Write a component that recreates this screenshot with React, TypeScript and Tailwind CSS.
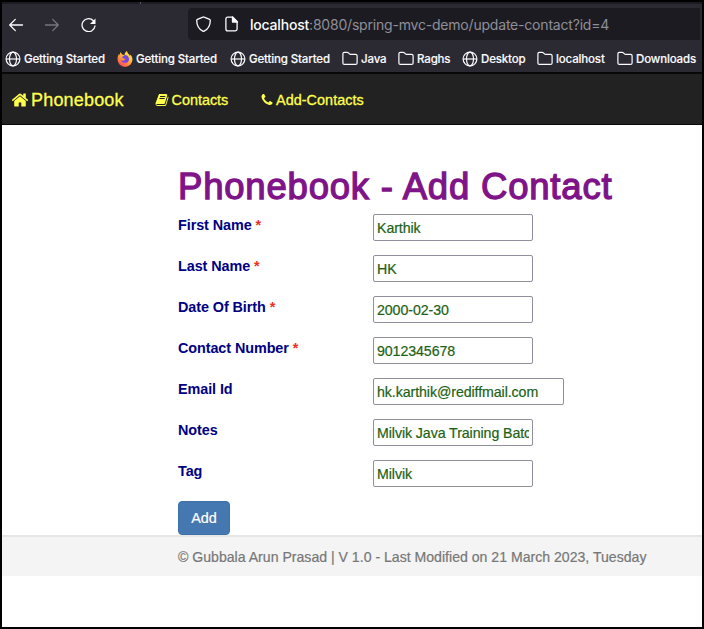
import type { ReactNode } from "react";

const HOME =
  "M1472 992v480q0 26-19 45t-45 19h-384v-384h-256v384h-384q-26 0-45-19t-19-45v-480q0-1 .5-3t.5-3l575-474 575 474q1 2 1 6zm223-69l-62 74q-8 9-21 11h-3q-13 0-21-7l-692-577-692 577q-12 8-24 7-13-2-21-11l-62-74q-8-10-7-23.5t11-21.5l719-599q32-26 76-26t76 26l244 204v-195q0-14 9-23t23-9h192q14 0 23 9t9 23v408l219 182q10 8 11 21.5t-7 23.5z";
const BOOK =
  "M1703 478q40 57 18 129l-275 906q-19 64-76.5 107.5t-122.5 43.5h-923q-77 0-148.5-53.5t-99.5-131.5q-24-67-2-127 0-4 3-27t4-37q1-8-3-21.5t-3-19.5q2-11 8-21t16.5-23.5 16.5-23.5q23-38 45-91.5t30-91.5q3-10 .5-30t-.5-28q3-11 17-28t17-23q21-36 42-92t25-90q1-9-2.5-32t.5-28q4-13 22-30.5t22-22.5q19-26 42.5-84.5t27.5-96.5q1-8-3-25.5t-2-26.5q2-8 9-18t18-23 17-21q8-12 16.5-30.5t15-35 16-36 19.5-32 26.5-23.5 36-11.5 47.5 5.5l-1 3q38-9 51-9h761q74 0 114 56t18 130l-274 906q-36 119-71.5 153.5t-128.5 34.5h-869q-27 0-38 15-11 16-1 43 24 70 144 70h923q29 0 56-15.5t35-41.5l300-987q7-22 5-57 38 15 59 43zm-1064 2q-4 13 2 22.5t20 9.5h608q13 0 25.5-9.5t16.5-22.5l21-64q4-13-2-22.5t-20-9.5h-608q-13 0-25.5 9.5t-16.5 22.5zm-83 256q-4 13 2 22.5t20 9.5h608q13 0 25.5-9.5t16.5-22.5l21-64q4-13-2-22.5t-20-9.5h-608q-13 0-25.5 9.5t-16.5 22.5z";
const PHONE =
  "M1600 1240q0 27-10 70.5t-21 68.5q-21 50-122 106-94 51-186 51-27 0-53-3.5t-57.5-12.5-47-14.5-55.5-20.5-49-18q-98-35-175-83-127-79-264-216t-216-264q-48-77-83-175-3-9-18-49t-20.5-55.5-14.5-47-12.5-57.5-3.5-53q0-92 51-186 56-101 106-122 25-11 68.5-21t70.5-10q14 0 21 3 18 6 53 76 11 19 30 54t35 63.5 31 53.5q3 4 17.5 25t21.5 35.5 7 28.5q0 20-28.5 50t-62 55-62 53-28.5 46q0 9 5 22.5t8.5 20.5 14 24 11.5 19q76 137 174 235t235 174q2 1 19 11.5t24 14 20.5 8.5 22.5 5q18 0 46-28.5t53-62 55-62 50-28.5q14 0 28.5 7t35.5 21.5 25 17.5q25 15 53.5 31t63.5 35 54 30q70 35 76 53 3 7 3 21z";

function Globe() {
  return (
    <svg className="size-4 shrink-0" viewBox="0 0 16 16" fill="none" stroke="#fbfbfe" strokeWidth="1.2">
      <circle cx="8" cy="8" r="6.9" />
      <ellipse cx="8" cy="8" rx="3.5" ry="6.9" />
      <path d="M1.1 8h13.8" />
    </svg>
  );
}

function Folder() {
  return (
    <svg className="size-4 shrink-0" viewBox="0 0 16 16" fill="none" stroke="#fbfbfe" strokeWidth="1.2" strokeLinejoin="round">
      <path d="M.9 11.900V2.700Q.9 1.300 2.300 1.300h2.900q.6 0 1 .4l1.300 1.200q.4.4 1 .4h5.100q1.500 0 1.500 1.500v7.100q0 1.500-1.500 1.500H2.400Q.9 13.400.9 11.900z" />
    </svg>
  );
}

function Firefox() {
  return (
    <svg className="size-4 shrink-0" viewBox="0 0 16 16">
      <defs>
        <linearGradient id="flame" x1="0.85" y1="0.05" x2="0.2" y2="1">
          <stop offset="0" stopColor="#fff04a" />
          <stop offset="0.45" stopColor="#ffb03a" />
          <stop offset="0.8" stopColor="#ff6a43" />
          <stop offset="1" stopColor="#f0367d" />
        </linearGradient>
      </defs>
      <path
        fill="url(#flame)"
        d="M10 0C10.200 1.600 11 2.500 12 3.300c.4.500.7 1.100.8 1.700.4-.3.500-.8.400-1.600 1.300 1.200 2.300 3 2.300 5.200A7.500 7.300 0 0 1 .5 8.600C.5 6.300 1 4.300 2.200 2.800l.3 1.600C3 3.300 3.200 2.100 3.200 1l2.400 2.800 1.900.3C7.400 2.500 8.500.8 10 0z"
      />
      <path
        fill="#7348dc"
        d="M7.500 4.100c2.600-.3 4.500 1.600 4.500 4.100 0 2.200-1.700 3.900-3.900 3.900-2.200 0-3.700-1.400-3.900-3 1.100.8 2.600.7 3.400-.1.800-.8.400-1.400-.5-1.500-1.100-.1-1.800-.5-1.900-1.300.3-.7.900-1.100 1.800-1.200z"
      />
      <path fill="#b53ae0" d="M4.700 10.300c1 .7 2.600.7 3.700-.2l1 1.700c-1.700.8-3.800.2-4.700-1.500z" />
    </svg>
  );
}

function Awesome({ d, className }: { d: string; className: string }) {
  return (
    <svg viewBox="0 0 1792 1792" fill="#ffff4d" className={className}>
      <path d={d} />
    </svg>
  );
}

function Bookmark({ icon, label, className }: { icon: ReactNode; label: string; className: string }) {
  return (
    <div className={`flex shrink-0 items-center gap-[3px] ${className}`}>
      {icon}
      <span className="pt-[2px]">{label}</span>
    </div>
  );
}

function Field({ label, value, required, wide }: { label: string; value: string; required?: boolean; wide?: boolean }) {
  return (
    <div className="flex h-[41px] items-start">
      <label className="w-[195px] pt-px text-[14.4px] leading-5 font-bold tracking-[-0.08px] text-[#000084]">
        {label}
        {required && <span className="text-[#ee3024]"> *</span>}
      </label>
      <input
        className={`h-[27px] rounded-[2px] border border-[#8f8f9d] bg-white px-[3px] text-[14.2px] tracking-[-0.08px] text-[#1d6214] outline-none [-webkit-text-stroke:0.2px_#1d6214] ${wide ? "w-[191px]" : "w-[160px]"}`}
        defaultValue={value}
      />
    </div>
  );
}

export default function App() {
  return (
    <div className="flex h-[629px] w-[704px] flex-col overflow-hidden border-2 border-black bg-white font-['Liberation_Sans',Arial,sans-serif]">
      <header className="h-[70px] shrink-0 bg-[#2b2a33] font-[Inter,sans-serif] text-[#fbfbfe]">
        <div className="flex h-[2px] bg-[#1c1b22]">
          <div className="ml-[138px] w-px bg-[#5a5963]" />
        </div>
        <div className="mt-1 flex h-8 items-center">
          <svg className="ml-[6px] size-4" viewBox="0 0 16 16" fill="none" stroke="#fbfbfe" strokeWidth="1.3" strokeLinecap="round" strokeLinejoin="round">
            <path d="M14.500 9H1.700M7.300 3.400 1.700 9l5.600 5.600" />
          </svg>
          <svg className="ml-[20px] size-4" viewBox="0 0 16 16" fill="none" stroke="#77767e" strokeWidth="1.3" strokeLinecap="round" strokeLinejoin="round">
            <path d="M1.500 9h12.800M8.700 3.400l5.600 5.600-5.600 5.600" />
          </svg>
          <svg className="ml-[20px] size-4" viewBox="0 0 16 16" fill="none" stroke="#fbfbfe" strokeWidth="1.3" strokeLinecap="round">
            <path d="M15 10A6.500 6.500 0 1 1 13.400 4.800" />
            <path d="M15.500 2.500v5.500H10z" fill="#fbfbfe" stroke="none" />
          </svg>
          <div className="ml-[92px] flex h-8 w-[512px] items-center rounded-l-[4px] bg-[#1c1b22] pl-2">
            <svg className="size-4" viewBox="0 0 16 16" fill="none" stroke="#fbfbfe" strokeWidth="1.3" strokeLinejoin="round">
              <path d="M6.900 1.100Q7.500.8 8.100 1.100l5.500 2.200q.7.300.7 1C14.300 9.500 11.500 13.500 8.100 15.200q-.6.300-1.200 0C3.500 13.500.7 9.500.7 4.300q0-.7.700-1z" />
            </svg>
            <svg className="ml-3 size-4" viewBox="0 0 16 16" fill="none" stroke="#fbfbfe" strokeWidth="1.3" strokeLinejoin="round">
              <path d="M1.900 3Q1.900 1.200 3.700 1.200h5l4.400 4.400v7.500q0 1.800-1.800 1.800H3.700q-1.800 0-1.800-1.800z" />
              <path d="M8.500 1v5h5z" fill="#fbfbfe" />
            </svg>
            <span className="ml-[10px] pt-px text-[14px] tracking-[-0.2px] text-[#8f8f98]">
              <span className="font-medium text-[#fbfbfe]">localhost</span>:8080/spring-mvc-demo/update-contact?id=4
            </span>
          </div>
        </div>
        <div className="flex h-8 items-center pt-[5px] pl-[3px] text-[11.500px] font-medium tracking-[-0.15px] [-webkit-text-stroke:0.15px_#fbfbfe]">
          <Bookmark icon={<Globe />} label="Getting Started" className="w-[112px]" />
          <Bookmark icon={<Firefox />} label="Getting Started" className="w-[113px]" />
          <Bookmark icon={<Globe />} label="Getting Started" className="w-[112px]" />
          <Bookmark icon={<Folder />} label="Java" className="w-[56px]" />
          <Bookmark icon={<Folder />} label="Raghs" className="w-[64px]" />
          <Bookmark icon={<Globe />} label="Desktop" className="w-[75px]" />
          <Bookmark icon={<Folder />} label="localhost" className="w-[80px]" />
          <Bookmark icon={<Folder />} label="Downloads" className="w-[85px]" />
        </div>
      </header>

      <nav className="flex h-[53px] shrink-0 items-center border-t-2 border-b border-[#080808] bg-[#222] pt-[2px] text-[#ffff4d] [-webkit-text-stroke:0.3px_#ffff4d]">
        <a className="flex w-[144px] items-center pl-[9px] text-[18px] tracking-[0.18px]">
          <Awesome d={HOME} className="mr-[2px] size-[18px]" />
          Phonebook
        </a>
        <a className="ml-[9px] flex w-[106px] items-center pt-px text-[14.4px]">
          <Awesome d={BOOK} className="mr-[2.5px] size-[14px]" />
          Contacts
        </a>
        <a className="ml-[-1px] flex items-center pt-px text-[14.4px] tracking-[0.05px]">
          <Awesome d={PHONE} className="mr-[2px] size-[14px]" />
          Add-Contacts
        </a>
      </nav>

      <main className="h-[410px] shrink-0 pt-[40px] pl-[176px]">
        <h1 className="h-[49px] text-[36.5px] leading-[43px] tracking-[0.8px] text-[#7f1488] [-webkit-text-stroke:1.3px_#7f1488]">
          Phonebook - Add Contact
        </h1>
        <Field label="First Name" value="Karthik" required />
        <Field label="Last Name" value="HK" required />
        <Field label="Date Of Birth" value="2000-02-30" required />
        <Field label="Contact Number" value="9012345678" required />
        <Field label="Email Id" value="hk.karthik@rediffmail.com" wide />
        <Field label="Notes" value="Milvik Java Training Batch" />
        <Field label="Tag" value="Milvik" />
        <button className="h-[34px] w-[52px] rounded-[4px] border border-[#3f72a8] bg-[#4578b1] pt-[2px] text-[14.4px] text-white [-webkit-text-stroke:0.2px_white]">
          Add
        </button>
      </main>

      <footer className="h-[41px] shrink-0 border-t-2 border-[#e6e6e6] bg-[#f4f4f4] pl-[176px] text-[14.1px] leading-[40px] text-[#777] [-webkit-text-stroke:0.2px_#777]">
        © Gubbala Arun Prasad | V 1.0 - Last Modified on 21 March 2023, Tuesday
      </footer>
    </div>
  );
}
